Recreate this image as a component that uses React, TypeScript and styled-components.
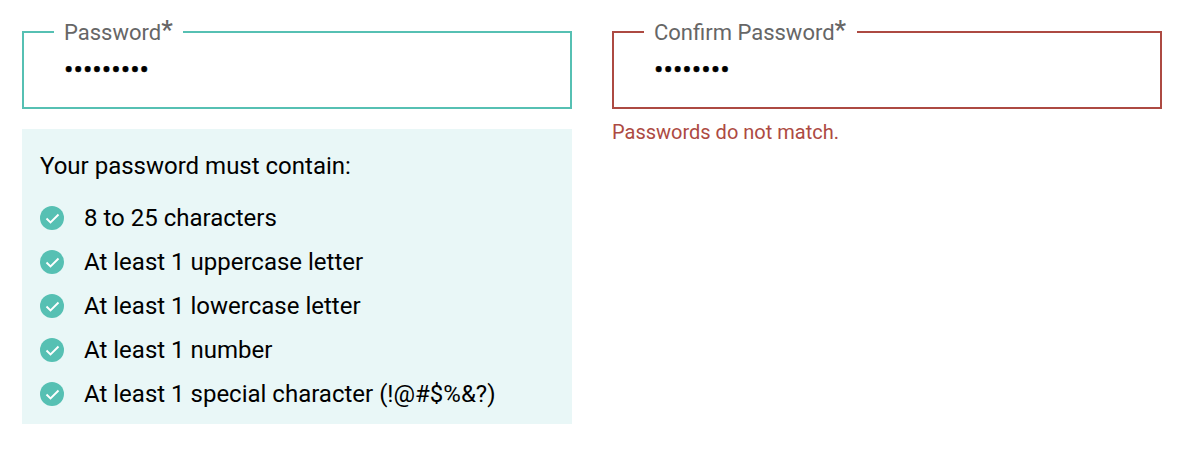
import React from 'react';
import styled, { createGlobalStyle } from 'styled-components';

const GlobalStyle = createGlobalStyle`
  * { box-sizing: border-box; }
  body { margin: 0; background: #fff; color: #000; font-family: Roboto, "Liberation Sans", sans-serif; }
`;

const Form = styled.form`
  display: grid;
  grid-template-columns: 550px 550px;
  column-gap: 40px;
  align-items: start;
  padding: 19px 22px 0;
`;

const Column = styled.div`
  display: flex;
  flex-direction: column;
`;

const Field = styled.fieldset<{ $color: string }>`
  margin: 0;
  min-width: 0;
  height: 90px;
  padding: 10px 40px 0;
  border: 2px solid ${p => p.$color};
`;

const Legend = styled.legend<{ $width: number }>`
  width: ${p => p.$width}px;
  height: 26px;
  margin-left: -10px;
  padding: 1px 10px 0;
  font-size: 22px;
  line-height: 26px;
  white-space: nowrap;
  color: #666;
`;

const Star = styled.span`
  display: inline-block;
  font-size: 26px;
  line-height: 20px;
  font-weight: 500;
  vertical-align: 1px;
`;

const PasswordInput = styled.input`
  display: block;
  width: 100%;
  height: 28px;
  padding: 0;
  border: 0;
  outline: 0;
  background: transparent;
  color: #000;
  font: 400 28px/28px Roboto, sans-serif;
  -webkit-text-stroke: 0.4px #000;
`;

const ErrorText = styled.p`
  margin: 11px 0 0;
  font-size: 20px;
  line-height: 24px;
  color: #ad4a42;
`;

const Requirements = styled.section`
  height: 295px;
  margin-top: 20px;
  padding: 22px 18px 0;
  background: #e9f7f7;
`;

const Heading = styled.h2`
  margin: 0 0 15px;
  font-size: 24px;
  font-weight: 400;
  line-height: 30px;
`;

const List = styled.ul`
  margin: 0;
  padding: 0;
  list-style: none;
`;

const Item = styled.li`
  display: flex;
  align-items: center;
  gap: 20px;
  height: 44px;
  font-size: 24px;
  line-height: 30px;
`;

const CheckIcon = () => (
  <svg width="24" height="24" viewBox="0 0 24 24" aria-hidden="true">
    <circle cx="12" cy="12" r="12" fill="#56c0b3" />
    <path d="M6.5 12.5l4 4 8-8" fill="none" stroke="#fff" strokeWidth="1.9" />
  </svg>
);

const rules = [
  '8 to 25 characters',
  'At least 1 uppercase letter',
  'At least 1 lowercase letter',
  'At least 1 number',
  'At least 1 special character (!@#$%&?)',
];

export default function App() {
  return (
    <>
      <GlobalStyle />
      <Form>
        <Column>
          <Field $color="#56c0b3">
            <Legend $width={129}>Password<Star>*</Star></Legend>
            <PasswordInput type="password" aria-label="Password" defaultValue="Abcdef12!" />
          </Field>
          <Requirements>
            <Heading>Your password must contain:</Heading>
            <List>
              {rules.map(rule => <Item key={rule}><CheckIcon />{rule}</Item>)}
            </List>
          </Requirements>
        </Column>
        <Column>
          <Field $color="#ad4a42">
            <Legend $width={213}>Confirm Password<Star>*</Star></Legend>
            <PasswordInput type="password" aria-label="Confirm Password" defaultValue="Abcdef12" />
          </Field>
          <ErrorText>Passwords do not match.</ErrorText>
        </Column>
      </Form>
    </>
  );
}
